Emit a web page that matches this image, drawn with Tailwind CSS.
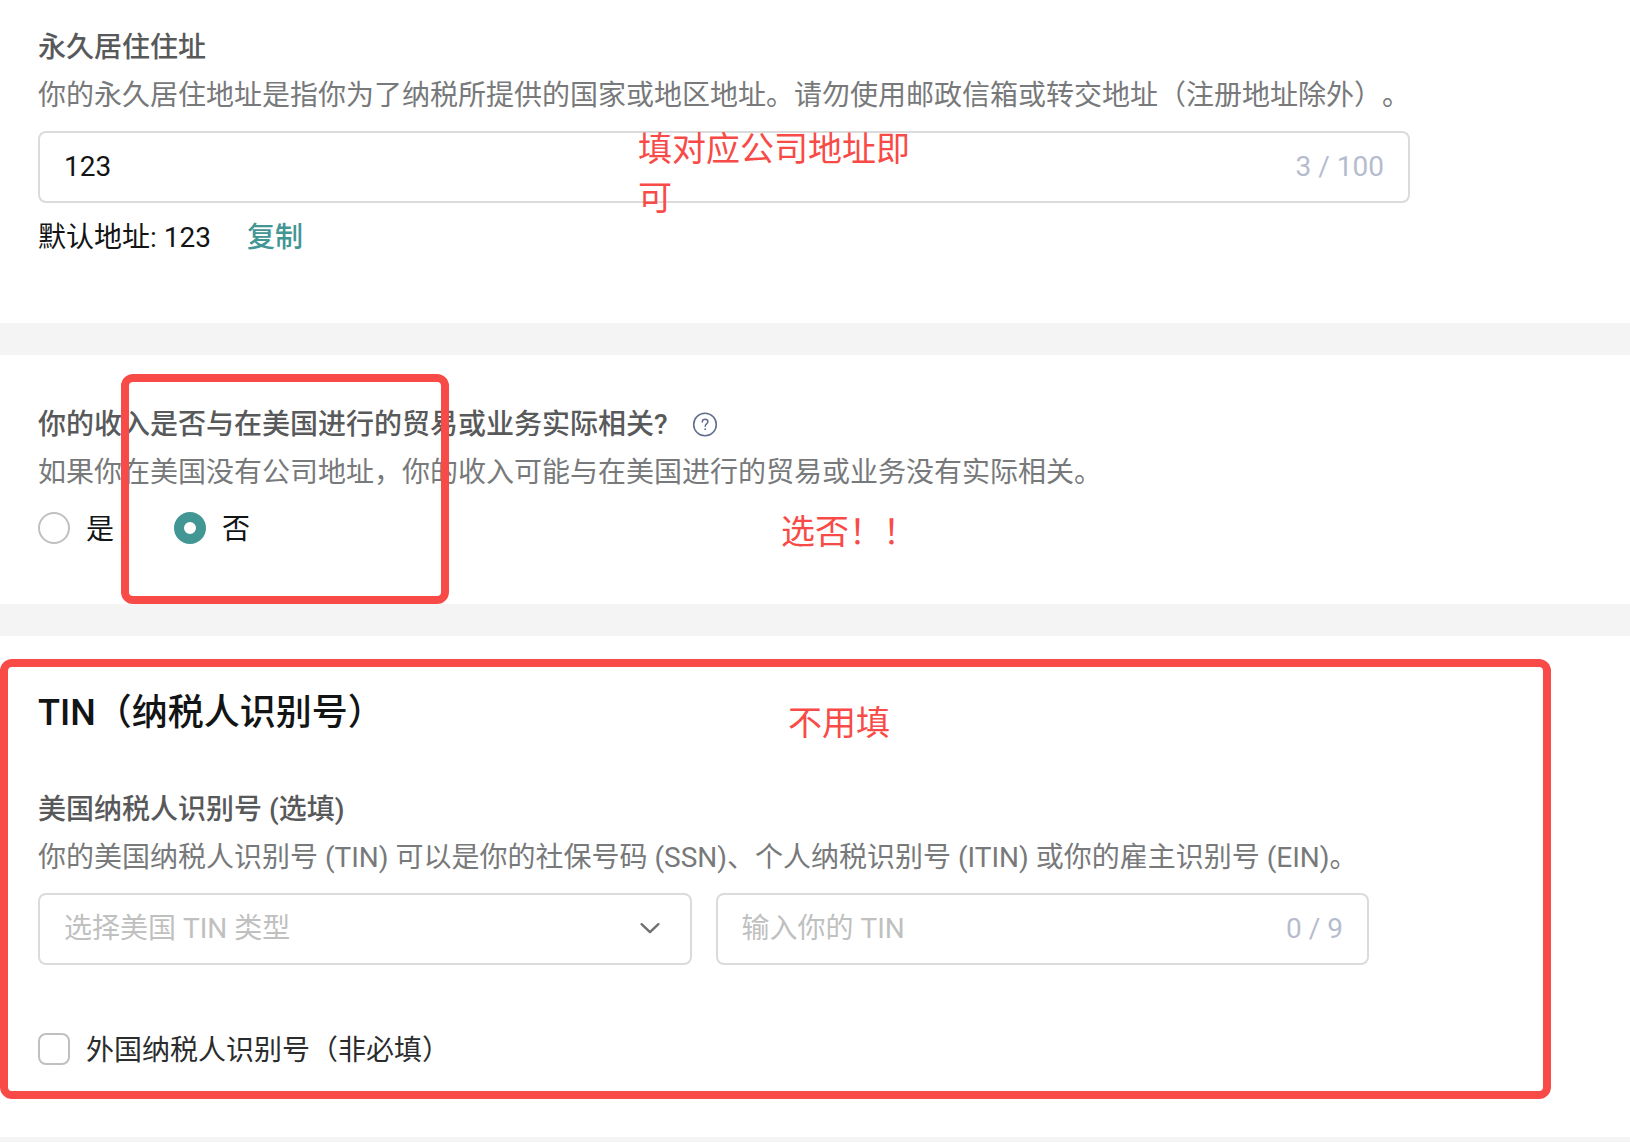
<!DOCTYPE html>
<html lang="zh-CN" class="bg-white">
<head>
    <meta charset="UTF-8">
    <meta name="viewport" content="width=device-width, initial-scale=1.0">
    <title>税务信息</title>
    <script src="https://cdn.jsdelivr.net/npm/@tailwindcss/browser@4"></script>
</head>
<body class="bg-white font-[Roboto,'Noto_Sans_CJK_SC',sans-serif] text-[28px] leading-[48px] text-[#121415] [text-spacing-trim:space-all]">
    <!-- Permanent address -->
    <section class="relative px-[38px] pt-6 pb-[62px]">
        <label for="address" class="block font-medium text-[#58595a]">永久居住住址</label>
        <p class="text-[#77797a]">你的永久居住地址是指你为了纳税所提供的国家或地区地址。请勿使用邮政信箱或转交地址（注册地址除外）。</p>
        <div class="mt-[11px] flex h-[72px] max-w-[1372px] items-center rounded-lg border-2 border-[#dadbdb] px-6">
            <input id="address" type="text" value="123" maxlength="100" class="min-w-0 flex-1 outline-none">
            <span class="text-[#b6bccf]">3 / 100</span>
        </div>
        <div class="mt-3 flex items-center gap-9 leading-[46px]">
            <span>默认地址: 123</span>
            <button type="button" class="font-medium text-[#429693]">复制</button>
        </div>
        <p class="absolute top-[125px] left-[638px] w-[280px] text-[34px] leading-[49px] text-[#f84b47]">填对应公司地址即可</p>
    </section>

    <div class="h-8 bg-[#f4f4f4]"></div>

    <!-- US trade or business -->
    <section class="relative px-[38px] pt-[46px] pb-14">
        <div class="flex items-center gap-6">
            <h2 id="us-business" class="font-medium text-[#58595a]">你的收入是否与在美国进行的贸易或业务实际相关?</h2>
            <button type="button" aria-label="帮助">
                <svg class="size-[26px]" viewBox="0 0 26 26" fill="none" stroke="#626d8f" stroke-linecap="round" stroke-linejoin="round">
                    <circle cx="13" cy="12.5" r="11.3" stroke-width="1.6"/>
                    <path d="M10.3 9.9c0-1.7 1.1-2.7 2.8-2.7s2.8 1 2.8 2.5c0 2.1-2.7 2.2-2.7 4.5" stroke-width="1.5"/>
                    <circle cx="13.1" cy="17.2" r=".5" fill="#626d8f" stroke-width=".9"/>
                </svg>
            </button>
        </div>
        <p class="text-[#77797a]">如果你在美国没有公司地址，你的收入可能与在美国进行的贸易或业务没有实际相关。</p>
        <div role="radiogroup" aria-labelledby="us-business" class="mt-[15px] flex gap-[60px] leading-9">
            <label class="flex items-start gap-4">
                <input type="radio" name="us_business" value="yes" class="size-8 appearance-none rounded-full border-2 border-[#bfc0c0] checked:border-[10px] checked:border-[#429693]">
                是
            </label>
            <label class="flex items-start gap-4">
                <input type="radio" name="us_business" value="no" checked class="size-8 appearance-none rounded-full border-2 border-[#bfc0c0] checked:border-[10px] checked:border-[#429693]">
                否
            </label>
        </div>
        <div class="pointer-events-none absolute top-[19px] bottom-0 left-[121px] w-[328px] rounded-xl border-8 border-[#f84b47]"></div>
        <p class="absolute top-[153px] left-[781px] text-[34px] text-[#f84b47]">选否！！</p>
    </section>

    <div class="h-8 bg-[#f4f4f4]"></div>

    <!-- TIN -->
    <section class="relative px-[38px] pt-[53px] pb-[68px]">
        <h1 class="text-[36px] font-medium">TIN（纳税人识别号）</h1>
        <h2 class="mt-[49px] font-medium text-[#58595a]">美国纳税人识别号 (选填)</h2>
        <p class="text-[#77797a]">你的美国纳税人识别号 (TIN) 可以是你的社保号码 (SSN)、个人纳税识别号 (ITIN) 或你的雇主识别号 (EIN)。</p>
        <div class="mt-[11px] grid max-w-[1331px] grid-cols-2 gap-6">
            <div class="relative">
                <select aria-label="选择美国 TIN 类型" class="h-[72px] w-full appearance-none rounded-lg border-2 border-[#dadbdb] px-6 text-[#bfc0c0] outline-none">
                    <option>选择美国 TIN 类型</option>
                    <option>SSN</option>
                    <option>ITIN</option>
                    <option>EIN</option>
                </select>
                <svg class="pointer-events-none absolute top-6 right-[30px] size-6" viewBox="0 0 24 24" fill="none" stroke="#6f7172" stroke-width="2.4" stroke-linecap="round" stroke-linejoin="round">
                    <path d="M3.6 7.2l8.4 8 8.4-8"/>
                </svg>
            </div>
            <div class="flex h-[72px] items-center rounded-lg border-2 border-[#dadbdb] px-6">
                <input type="text" aria-label="输入你的 TIN" placeholder="输入你的 TIN" maxlength="9" class="min-w-0 flex-1 outline-none placeholder:text-[#bfc0c0]">
                <span class="text-[#b6bccf]">0 / 9</span>
            </div>
        </div>
        <label class="mt-[68px] flex items-start gap-4 leading-9 text-[#2b2c2d]">
            <input type="checkbox" class="size-8 appearance-none rounded-lg border-2 border-[#bfc0c0] checked:bg-[#429693]">
            外国纳税人识别号（非必填）
        </label>
        <div class="pointer-events-none absolute top-[23px] right-[79px] bottom-[38px] left-0 rounded-xl border-8 border-[#f84b47]"></div>
        <p class="absolute top-[63px] left-[788px] text-[34px] text-[#f84b47]">不用填</p>
    </section>

    <div class="h-[5px] bg-[#f4f4f4]"></div>
</body>
</html>
